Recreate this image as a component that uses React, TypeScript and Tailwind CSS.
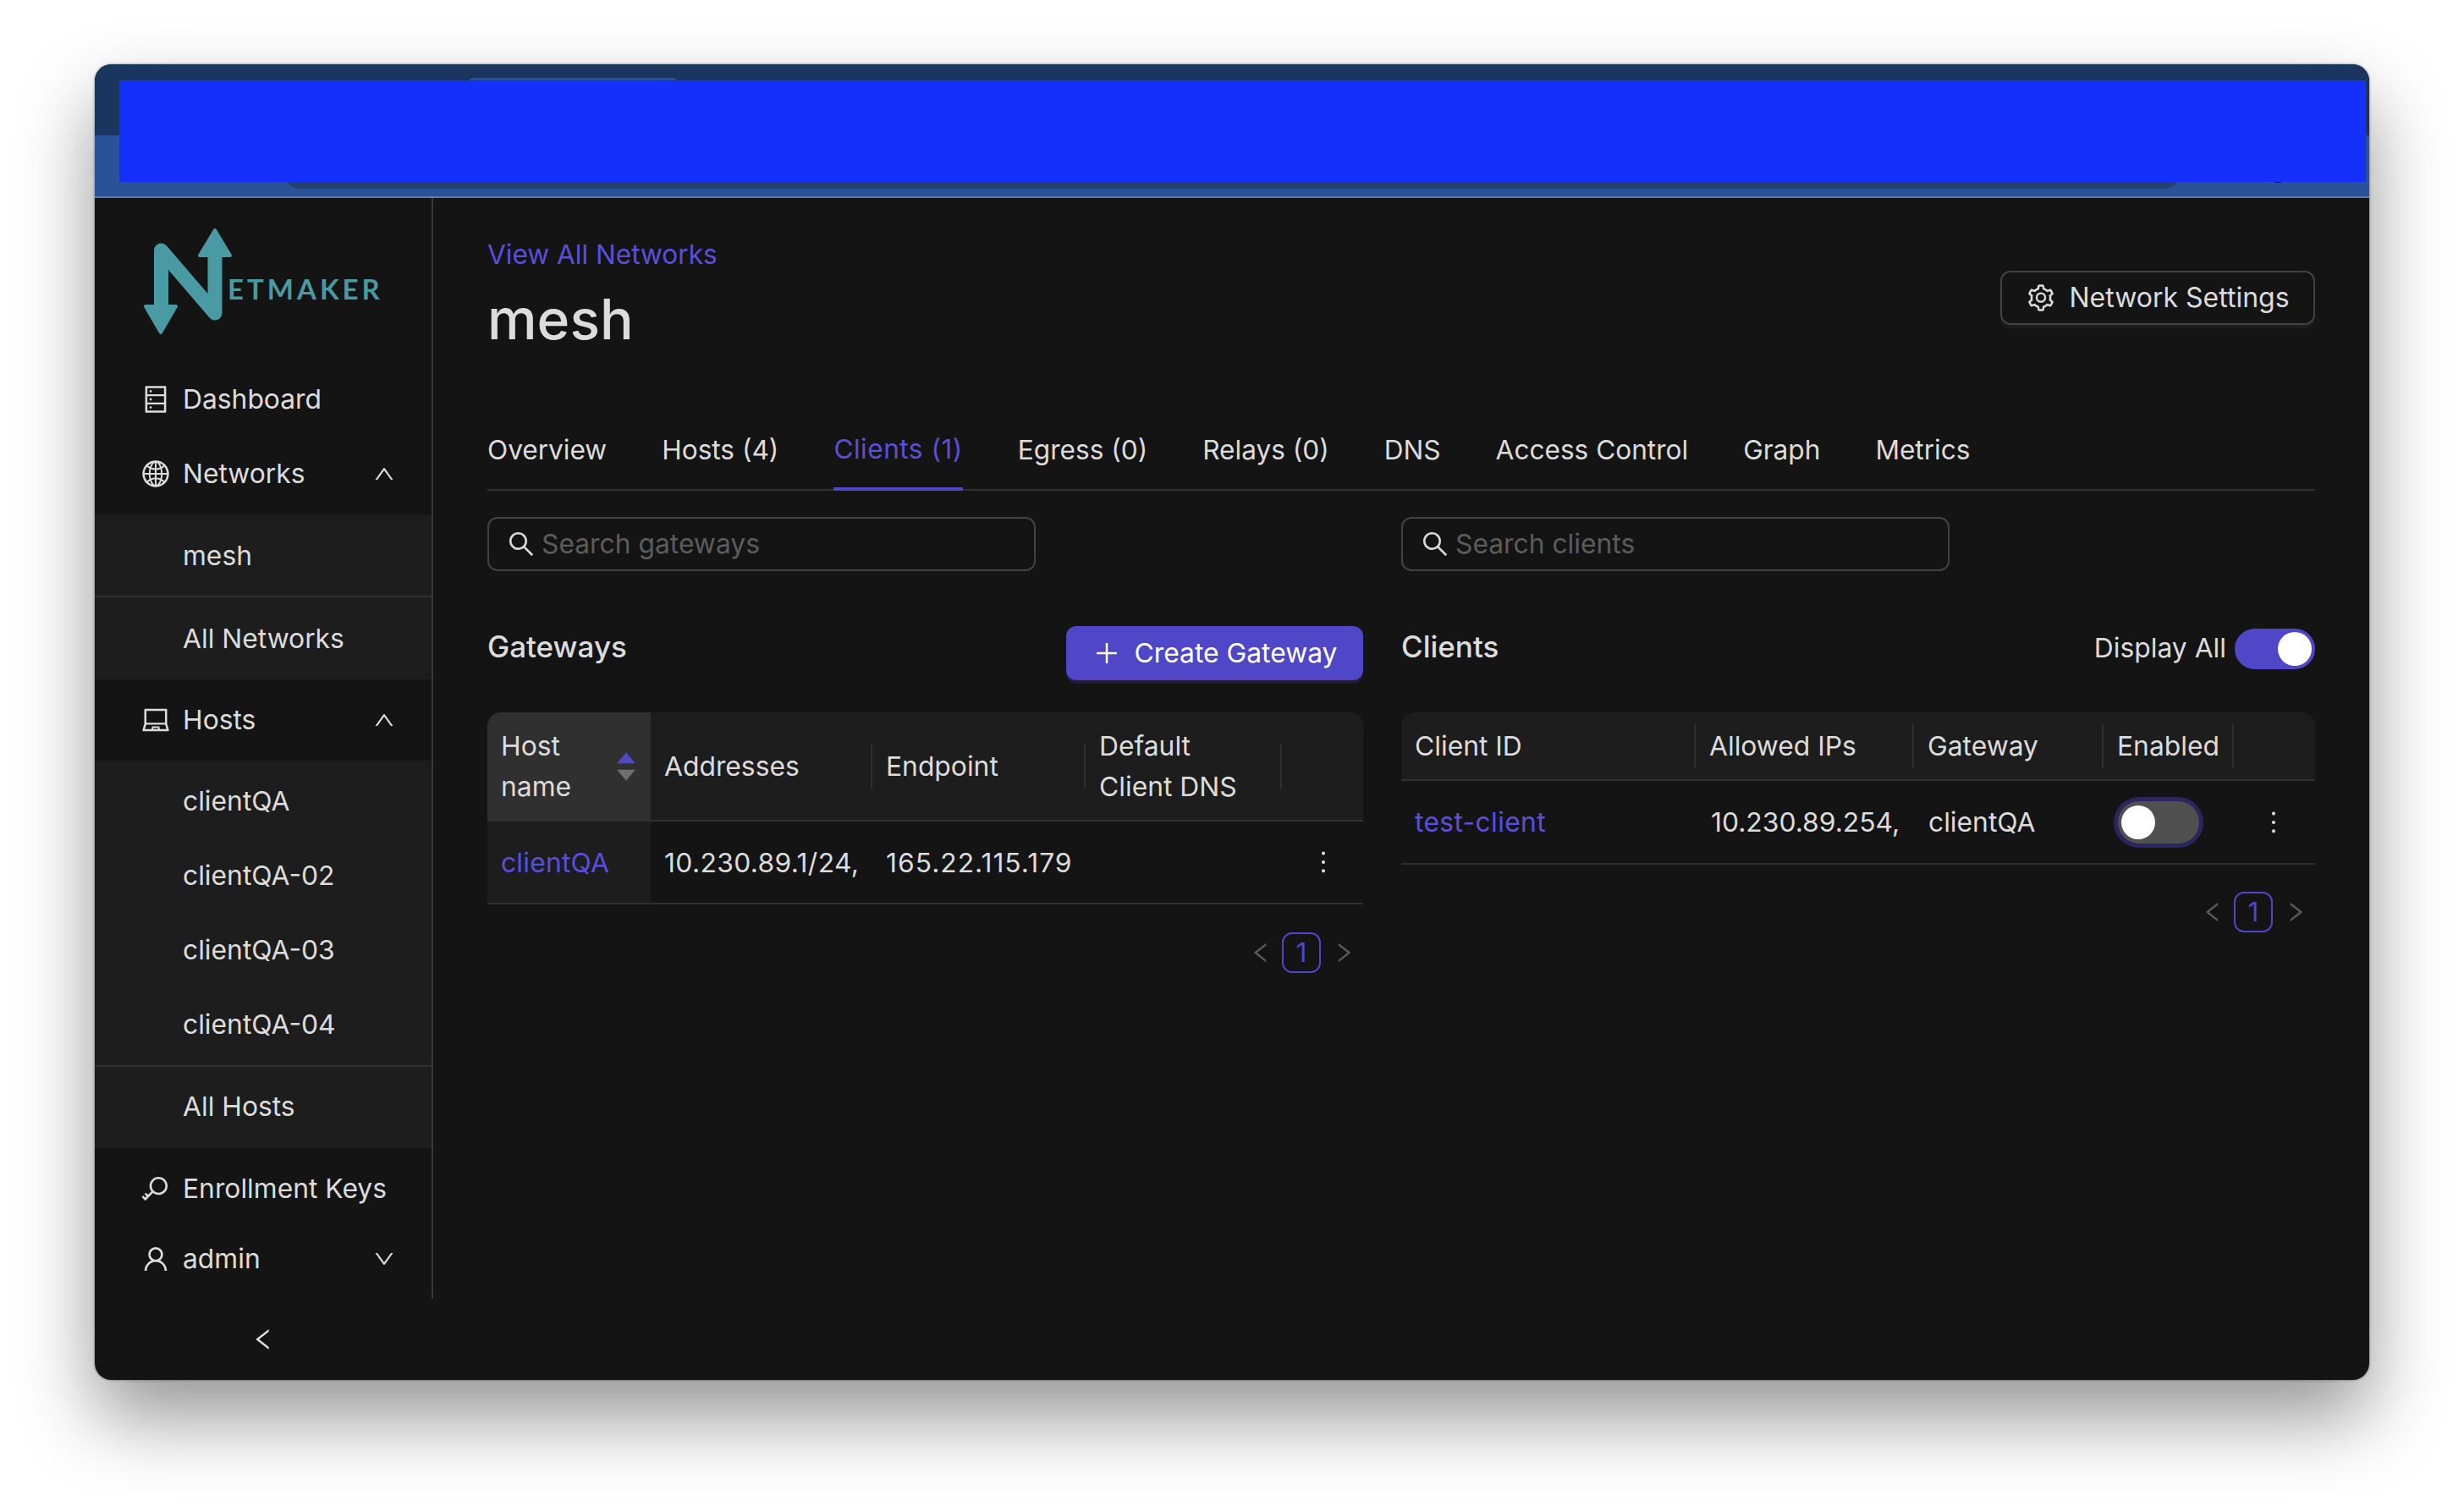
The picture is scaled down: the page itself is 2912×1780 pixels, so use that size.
import React from 'react';
import {
  AiOutlineDatabase,
  AiOutlineGlobal,
  AiOutlineLaptop,
  AiOutlineKey,
  AiOutlineUser,
  AiOutlineUp,
  AiOutlineDown,
  AiOutlineLeft,
  AiOutlineRight,
  AiOutlineSetting,
  AiOutlineSearch,
  AiOutlinePlus,
  AiOutlineMore,
  AiFillCaretUp,
  AiFillCaretDown,
} from 'react-icons/ai';

const TABS = ['Overview', 'Hosts (4)', 'Clients (1)', 'Egress (0)', 'Relays (0)', 'DNS', 'Access Control', 'Graph', 'Metrics'];

function Logo() {
  return (
    <div className="flex h-[198px] items-start pl-[49px] pt-[33px]">
      <svg width="120" height="136" viewBox="160 268 120 136" className="shrink-0">
        <path d="M189.5 362V297L253 371V304" fill="none" stroke="#4a9aa4" strokeWidth="17" strokeLinejoin="round" strokeLinecap="round" />
        <path d="M171 363H207L189 394Z M235 303H271L253 273Z" fill="#4a9aa4" stroke="#4a9aa4" strokeWidth="4" strokeLinejoin="round" />
      </svg>
      <span className="ml-[-12px] mt-[54px] font-[Lato,sans-serif] text-[33px] font-bold leading-[40px] tracking-[4px] text-[#4a9aa4]">ETMAKER</span>
    </div>
  );
}

function NavRow({ icon, label, chevron, className }: { icon: React.ReactNode; label: string; chevron?: 'up' | 'down'; className: string }) {
  return (
    <div className={`flex items-center pl-[54px] pr-[42px] ${className}`}>
      <span className="flex w-[36px] justify-center text-[36px]">{icon}</span>
      <span className="ml-[14px] flex-1">{label}</span>
      {chevron === 'up' && <AiOutlineUp size={28} />}
      {chevron === 'down' && <AiOutlineDown size={28} />}
    </div>
  );
}

function SubRow({ label, className }: { label: string; className: string }) {
  return <div className={`flex items-center pl-[104px] ${className}`}>{label}</div>;
}

function Sidebar() {
  return (
    <div className="flex w-[400px] shrink-0 flex-col">
      <div className="h-[1301px] border-r-2 border-[#3a3a3a]">
        <Logo />
        <NavRow icon={<AiOutlineDatabase />} label="Dashboard" className="h-[80px]" />
        <NavRow icon={<AiOutlineGlobal />} label="Networks" chevron="up" className="h-[97px] pb-[1px]" />
        <div className="bg-[#1d1d1d]">
          <SubRow label="mesh" className="h-[97px] border-b-2 border-[#303030]" />
          <SubRow label="All Networks" className="h-[97px]" />
        </div>
        <NavRow icon={<AiOutlineLaptop />} label="Hosts" chevron="up" className="h-[96px]" />
        <div className="bg-[#1d1d1d]">
          <div className="border-b-2 border-[#303030] pb-[4px] pt-[4px]">
            <SubRow label="clientQA" className="h-[88px]" />
            <SubRow label="clientQA-02" className="h-[88px]" />
            <SubRow label="clientQA-03" className="h-[88px]" />
            <SubRow label="clientQA-04" className="h-[88px]" />
          </div>
          <SubRow label="All Hosts" className="h-[96px] pb-[2px]" />
        </div>
        <NavRow icon={<AiOutlineKey />} label="Enrollment Keys" className="h-[96px]" />
        <NavRow icon={<AiOutlineUser />} label="admin" chevron="down" className="h-[70px]" />
      </div>
      <div className="flex flex-1 items-center justify-center pr-[2px]">
        <AiOutlineLeft size={32} />
      </div>
    </div>
  );
}

function SearchBox({ placeholder }: { placeholder: string }) {
  return (
    <div className="flex h-[64px] w-[648px] items-center rounded-[12px] border-2 border-[#424242] pl-[20px]">
      <AiOutlineSearch size={36} className="shrink-0 text-[#d8d8d8]" />
      <input
        placeholder={placeholder}
        className="ml-[6px] w-full bg-transparent text-[31.8px] outline-none placeholder:text-[#5c5c5c]"
      />
    </div>
  );
}

function Pagination() {
  return (
    <div className="flex items-center justify-end pr-[8px] text-[#5c5c5c]">
      <AiOutlineLeft size={30} className="mr-[10px]" />
      <span className="mr-[12px] flex h-[48px] w-[46px] items-center justify-center rounded-[12px] border-2 border-[#5046c8] text-[#5046c8]">1</span>
      <AiOutlineRight size={30} />
    </div>
  );
}

function HeadCell({ children, className, divider = true }: { children?: React.ReactNode; className?: string; divider?: boolean }) {
  return (
    <div className={`flex items-center pl-[16px] ${className ?? ''}`}>
      <div className="flex-1 leading-[48px]">{children}</div>
      {divider && <span className="h-[52px] w-[2px] shrink-0 bg-[#303030]" />}
    </div>
  );
}

function Gateways() {
  return (
    <div className="w-[1035px]">
      <div className="flex h-[102px] items-start justify-between">
        <h3 className="text-[35px] font-medium leading-[48px]">Gateways</h3>
        <button className="flex h-[64px] w-[351px] items-center justify-center gap-[16px] rounded-[12px] bg-[#5046c8] text-white shadow-[0_4px_0_rgba(80,70,200,0.2)]">
          <AiOutlinePlus size={34} />
          Create Gateway
        </button>
      </div>
      <div className="grid grid-cols-[193px_262px_252px_232px_96px]">
        <div className="flex h-[129px] items-center rounded-tl-[16px] border-b-2 border-[#303030] bg-[#303030] pl-[16px]">
          <div className="flex-1 leading-[48px]">Host<br />name</div>
          <div className="mr-[14px] flex flex-col items-center text-[30px] leading-none">
            <AiFillCaretUp className="mb-[-10px] text-[#5046c8]" />
            <AiFillCaretDown className="text-[#6e6e6e]" />
          </div>
        </div>
        <HeadCell className="h-[129px] border-b-2 border-[#303030] bg-[#1d1d1d]">Addresses</HeadCell>
        <HeadCell className="h-[129px] border-b-2 border-[#303030] bg-[#1d1d1d]">Endpoint</HeadCell>
        <HeadCell className="h-[129px] border-b-2 border-[#303030] bg-[#1d1d1d]">Default<br />Client DNS</HeadCell>
        <div className="h-[129px] rounded-tr-[16px] border-b-2 border-[#303030] bg-[#1d1d1d]" />

        <div className="flex h-[98px] items-center border-b-2 border-[#303030] bg-[#1d1d1d] pl-[16px] pt-[2px] tracking-[0.2px] text-[#5a4fdc]">clientQA</div>
        <div className="flex h-[98px] items-center border-b-2 border-[#303030] pl-[16px] pt-[2px] tracking-[0.35px]">10.230.89.1/24,</div>
        <div className="flex h-[98px] items-center border-b-2 border-[#303030] pl-[16px] pt-[2px] tracking-[1px]">165.22.115.179</div>
        <div className="h-[98px] border-b-2 border-[#303030]" />
        <div className="flex h-[98px] items-center justify-end border-b-2 border-[#303030] pr-[28px]">
          <AiOutlineMore size={38} />
        </div>
      </div>
      <div className="mt-[33px]">
        <Pagination />
      </div>
    </div>
  );
}

function Clients() {
  return (
    <div className="w-[1080px]">
      <div className="flex h-[102px] items-start justify-between">
        <h3 className="text-[35px] font-medium leading-[48px]">Clients</h3>
        <div className="mt-[3px] flex items-center gap-[10px]">
          <span className="mt-[-2px]">Display All</span>
          <span className="flex h-[48px] w-[95px] items-center justify-end rounded-full bg-[#5046c8] pr-[4px]">
            <span className="h-[40px] w-[40px] rounded-full bg-white" />
          </span>
        </div>
      </div>
      <div className="grid grid-cols-[348px_258px_224px_154px_96px]">
        <HeadCell className="h-[81px] rounded-tl-[16px] border-b-2 border-[#303030] bg-[#1d1d1d]">Client ID</HeadCell>
        <HeadCell className="h-[81px] border-b-2 border-[#303030] bg-[#1d1d1d]">Allowed IPs</HeadCell>
        <HeadCell className="h-[81px] border-b-2 border-[#303030] bg-[#1d1d1d]">Gateway</HeadCell>
        <HeadCell className="h-[81px] border-b-2 border-[#303030] bg-[#1d1d1d]">Enabled</HeadCell>
        <div className="h-[81px] rounded-tr-[16px] border-b-2 border-[#303030] bg-[#1d1d1d]" />

        <div className="flex h-[99px] items-center border-b-2 border-[#303030] pl-[16px] tracking-[0.35px] text-[#5a4fdc]">test-client</div>
        <div className="flex h-[99px] items-center border-b-2 border-[#303030] pl-[18px]">10.230.89.254,</div>
        <div className="flex h-[99px] items-center border-b-2 border-[#303030] pl-[17px]">clientQA</div>
        <div className="flex h-[99px] items-center border-b-2 border-[#303030] pl-[17px]">
          <span className="flex h-[50px] w-[96px] items-center rounded-full bg-[#505050] pl-[4px] shadow-[0_0_0_5px_#2a2660]">
            <span className="h-[40px] w-[40px] rounded-full bg-white" />
          </span>
        </div>
        <div className="flex h-[99px] items-center justify-end border-b-2 border-[#303030] pr-[30px]">
          <AiOutlineMore size={38} />
        </div>
      </div>
      <div className="mt-[32px]">
        <Pagination />
      </div>
    </div>
  );
}

export default function App() {
  return (
    <div className="h-[1780px] w-[2912px] overflow-hidden bg-white pl-[112px] pt-[76px] font-[Inter,sans-serif] text-[31.8px] text-[#dcdcdc]">
      <div className="flex h-[1555px] w-[2688px] flex-col overflow-hidden rounded-[20px] bg-[#141414] shadow-[0_44px_90px_rgba(0,0,0,0.42),0_0_3px_rgba(0,0,0,0.5)]">
        {/* title bar, mostly covered by the blue box */}
        <div className="relative h-[158px] shrink-0 border-b-2 border-[#5a7ab0] bg-[#2a5298]">
          <div className="h-[84px] bg-[#1a365f]" />
          <div className="absolute left-[440px] top-[16px] h-[8px] w-[250px] rounded-t-[12px] bg-[#2a5298]" />
          <div className="absolute bottom-[9px] left-[223px] h-[30px] w-[2242px] rounded-b-[20px] bg-[#24416f]" />
          <div className="absolute bottom-[16px] left-[2566px] h-[28px] w-[28px] rounded-full bg-[#111111]" />
          <div className="absolute left-[29px] top-[19px] h-[120px] w-[2655px] bg-[#1430fa]" />
        </div>
        <div className="flex flex-1">
          <Sidebar />
          <div className="flex-1 pl-[64px] pr-[64px] pt-[43px]">
            <div className="flex items-start justify-between">
              <div className="text-[31.6px]">
                <div className="leading-[48px] text-[#5a4fdc]">View All Networks</div>
                <h1 className="mt-[8px] text-[66px] font-medium leading-[88px]">mesh</h1>
              </div>
              <button className="mt-[43px] flex h-[64px] w-[372px] items-center justify-center gap-[15px] rounded-[12px] border-2 border-[#424242] text-[32px] shadow-[0_4px_0_rgba(255,255,255,0.04)]">
                <AiOutlineSetting size={36} />
                Network Settings
              </button>
            </div>

            {/* tabs */}
            <div className="mt-[65px] flex h-[94px] gap-[65px] border-b-2 border-[#303030] text-[31.6px]">
              {TABS.map((tab) => (
                <div
                  key={tab}
                  className={
                    tab === 'Clients (1)'
                      ? 'mb-[-2px] flex items-center border-b-4 border-[#5046c8] tracking-[0.5px] text-[#5a4fdc]'
                      : 'flex items-center'
                  }
                >
                  {tab}
                </div>
              ))}
            </div>

            <div className="mt-[31px] flex gap-[45px]">
              <div className="w-[1035px]">
                <SearchBox placeholder="Search gateways" />
              </div>
              <SearchBox placeholder="Search clients" />
            </div>

            <div className="mt-[65px] flex gap-[45px]">
              <Gateways />
              <Clients />
            </div>
          </div>
        </div>
      </div>
    </div>
  );
}
